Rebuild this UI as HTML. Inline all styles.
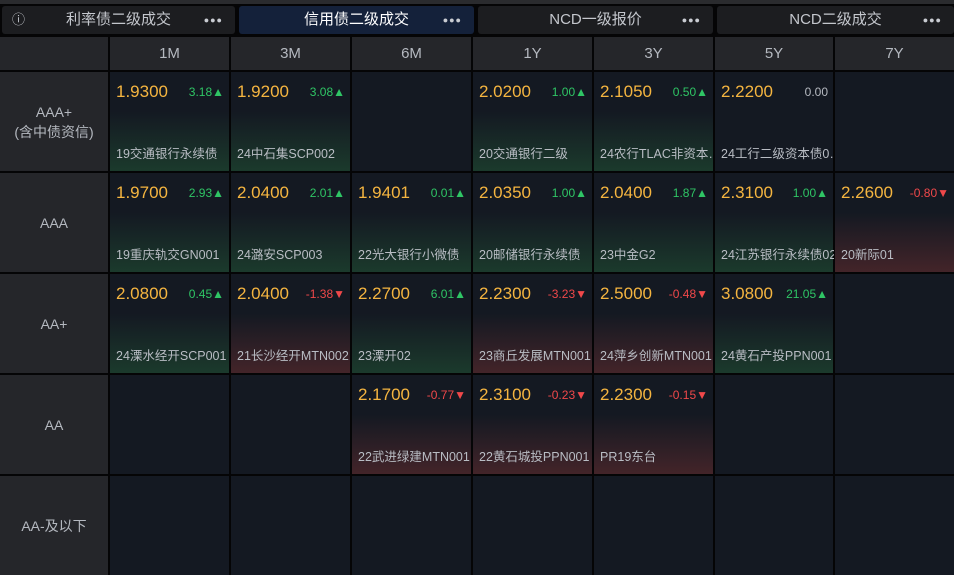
<!DOCTYPE html>
<html><head><meta charset="utf-8"><style>
*{margin:0;padding:0;box-sizing:border-box}
body{width:954px;height:573px;background:#050506;position:relative;overflow:hidden;font-family:"Liberation Sans","Noto Sans CJK SC",sans-serif}
.top{position:absolute;left:0;top:0;width:954px;height:4px;background:#2a2b2e}
.tab{position:absolute;top:6px;height:28px;background:#1c1d20;border-radius:3px;color:#c4c7cd;font-size:15px;line-height:28px;text-align:center}
.tab.act{background:#14213a;color:#fff}
.dots{position:absolute;right:12px;top:0;font-size:9px;letter-spacing:1px;color:#c9ccd2}
.h{position:absolute;top:37px;height:33px;background:#25262a;color:#b5b9c0;font-size:15px;line-height:33px;text-align:center}
.l{position:absolute;left:0;width:108px;height:99px;background:#25262a;color:#b5b9c0;font-size:14px;display:flex;align-items:center;justify-content:center;text-align:center;line-height:20px}
.c{position:absolute;width:119px;height:99px;background:#141922}
.g{background:linear-gradient(#141922 40%,#1b3a2c)}
.r{background:linear-gradient(#141922 40%,#432429)}
.p{position:absolute;left:6px;top:10px;font-size:17px;color:#f5b540}
.d{position:absolute;right:5px;top:13px;font-size:12px}
.up{color:#2fc565}.dn{color:#f0484a}.z{color:#b5b9c0}
.n{position:absolute;left:6px;top:71px;font-size:12.5px;color:#b9bdc4;white-space:nowrap;width:113px;overflow:hidden}
</style></head><body>
<div class="top"></div>
<div class="tab" style="left:2px;width:233px"><span style="position:absolute;left:10px;font-size:13px">ⓘ</span>利率债二级成交<span class="dots">●●●</span></div>
<div class="tab act" style="left:239px;width:235px">信用债二级成交<span class="dots">●●●</span></div>
<div class="tab" style="left:478px;width:235px">NCD一级报价<span class="dots">●●●</span></div>
<div class="tab" style="left:717px;width:237px">NCD二级成交<span class="dots">●●●</span></div>

<div class="h" style="left:0;width:108px"></div>
<div class="h" style="left:110px;width:119px">1M</div>
<div class="h" style="left:231px;width:119px">3M</div>
<div class="h" style="left:352px;width:119px">6M</div>
<div class="h" style="left:473px;width:119px">1Y</div>
<div class="h" style="left:594px;width:119px">3Y</div>
<div class="h" style="left:715px;width:118px">5Y</div>
<div class="h" style="left:835px;width:119px">7Y</div>

<div class="l" style="top:72px">AAA+<br>(含中债资信)</div>
<div class="l" style="top:173px">AAA</div>
<div class="l" style="top:274px">AA+</div>
<div class="l" style="top:375px">AA</div>
<div class="l" style="top:476px">AA-及以下</div>

<div class="c g" style="left:110px;top:72px"><span class="p">1.9300</span><span class="d up">3.18▲</span><span class="n">19交通银行永续债</span></div>
<div class="c g" style="left:231px;top:72px"><span class="p">1.9200</span><span class="d up">3.08▲</span><span class="n">24中石集SCP002</span></div>
<div class="c" style="left:352px;top:72px"></div>
<div class="c g" style="left:473px;top:72px"><span class="p">2.0200</span><span class="d up">1.00▲</span><span class="n">20交通银行二级</span></div>
<div class="c g" style="left:594px;top:72px"><span class="p">2.1050</span><span class="d up">0.50▲</span><span class="n">24农行TLAC非资本…</span></div>
<div class="c" style="left:715px;top:72px;width:118px"><span class="p">2.2200</span><span class="d z">0.00</span><span class="n">24工行二级资本债0…</span></div>
<div class="c" style="left:835px;top:72px"></div>

<div class="c g" style="left:110px;top:173px"><span class="p">1.9700</span><span class="d up">2.93▲</span><span class="n">19重庆轨交GN001</span></div>
<div class="c g" style="left:231px;top:173px"><span class="p">2.0400</span><span class="d up">2.01▲</span><span class="n">24潞安SCP003</span></div>
<div class="c g" style="left:352px;top:173px"><span class="p">1.9401</span><span class="d up">0.01▲</span><span class="n">22光大银行小微债</span></div>
<div class="c g" style="left:473px;top:173px"><span class="p">2.0350</span><span class="d up">1.00▲</span><span class="n">20邮储银行永续债</span></div>
<div class="c g" style="left:594px;top:173px"><span class="p">2.0400</span><span class="d up">1.87▲</span><span class="n">23中金G2</span></div>
<div class="c g" style="left:715px;top:173px;width:118px"><span class="p">2.3100</span><span class="d up">1.00▲</span><span class="n">24江苏银行永续债02</span></div>
<div class="c r" style="left:835px;top:173px"><span class="p">2.2600</span><span class="d dn">-0.80▼</span><span class="n">20新际01</span></div>

<div class="c g" style="left:110px;top:274px"><span class="p">2.0800</span><span class="d up">0.45▲</span><span class="n">24溧水经开SCP001</span></div>
<div class="c r" style="left:231px;top:274px"><span class="p">2.0400</span><span class="d dn">-1.38▼</span><span class="n">21长沙经开MTN002</span></div>
<div class="c g" style="left:352px;top:274px"><span class="p">2.2700</span><span class="d up">6.01▲</span><span class="n">23溧开02</span></div>
<div class="c r" style="left:473px;top:274px"><span class="p">2.2300</span><span class="d dn">-3.23▼</span><span class="n">23商丘发展MTN001</span></div>
<div class="c r" style="left:594px;top:274px"><span class="p">2.5000</span><span class="d dn">-0.48▼</span><span class="n">24萍乡创新MTN001</span></div>
<div class="c g" style="left:715px;top:274px;width:118px"><span class="p">3.0800</span><span class="d up">21.05▲</span><span class="n">24黄石产投PPN001</span></div>
<div class="c" style="left:835px;top:274px"></div>

<div class="c" style="left:110px;top:375px"></div>
<div class="c" style="left:231px;top:375px"></div>
<div class="c r" style="left:352px;top:375px"><span class="p">2.1700</span><span class="d dn">-0.77▼</span><span class="n">22武进绿建MTN001</span></div>
<div class="c r" style="left:473px;top:375px"><span class="p">2.3100</span><span class="d dn">-0.23▼</span><span class="n">22黄石城投PPN001</span></div>
<div class="c r" style="left:594px;top:375px"><span class="p">2.2300</span><span class="d dn">-0.15▼</span><span class="n">PR19东台</span></div>
<div class="c" style="left:715px;top:375px;width:118px"></div>
<div class="c" style="left:835px;top:375px"></div>

<div class="c" style="left:110px;top:476px"></div>
<div class="c" style="left:231px;top:476px"></div>
<div class="c" style="left:352px;top:476px"></div>
<div class="c" style="left:473px;top:476px"></div>
<div class="c" style="left:594px;top:476px"></div>
<div class="c" style="left:715px;top:476px;width:118px"></div>
<div class="c" style="left:835px;top:476px"></div>
</body></html>
